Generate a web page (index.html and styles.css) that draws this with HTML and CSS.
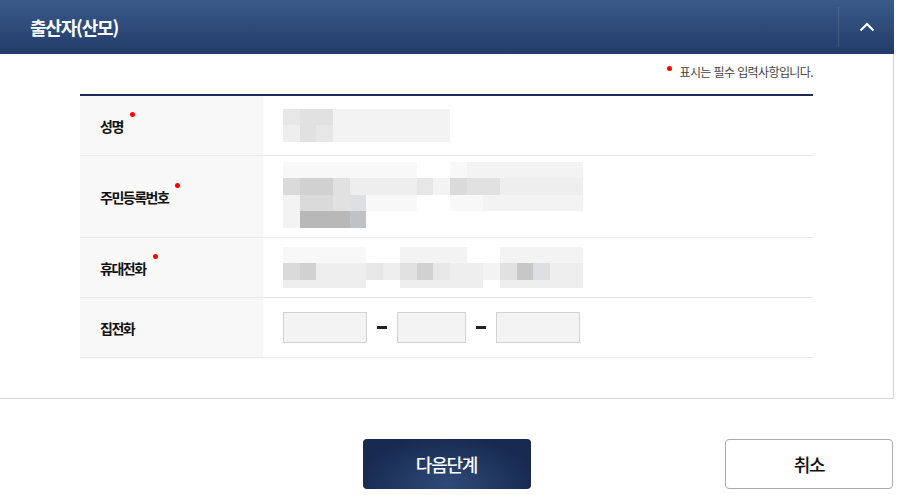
FILE: index.html
```html
<!DOCTYPE html>
<html lang="ko">

<head>
  <meta charset="UTF-8">
  <meta name="viewport" content="width=device-width, initial-scale=1.0">
  <title>출산자(산모)</title>

  <link rel="stylesheet" href="styles.css">
</head>

<body>
  <section class="panel">
    <header class="panel-head">
      <h2>출산자(산모)</h2>
      <button type="button" class="toggle" aria-label="접기">
        <svg width="16" height="10" viewBox="0 0 16 10">
          <path d="M1.5 8.5 L8 2 L14.5 8.5" fill="none" stroke="#fff" stroke-width="2.2" />
        </svg>
      </button>
    </header>

    <div class="panel-body">
      <p class="notice"><span class="req"></span>표시는 필수 입력사항입니다.</p>

      <table class="form-table">
        <tr>
          <th scope="row"><span class="label">성명<span class="req"></span></span></th>
          <td>
            <!-- 개인정보 모자이크 -->
            <div class="mosaic cols-10">
              <span class="s4"></span><span class="s5"></span><span class="s5"></span><span class="s2"></span><span class="s2"></span><span class="s2"></span><span class="s2"></span><span class="s2"></span><span class="s2"></span><span class="s2"></span>
              <span class="s3"></span><span class="s5"></span><span class="s4"></span><span class="s2"></span><span class="s2"></span><span class="s2"></span><span class="s2"></span><span class="s2"></span><span class="s2"></span><span class="s2"></span>
            </div>
          </td>
        </tr>
        <tr>
          <th scope="row"><span class="label">주민등록번호<span class="req"></span></span></th>
          <td class="tall">
            <div class="mosaic cols-18">
              <span class="s1"></span><span class="s1"></span><span class="s1"></span><span class="s1"></span><span class="s1"></span><span class="s1"></span><span class="s1"></span><span class="s1"></span><span class="s0"></span><span class="s0"></span><span class="s1"></span><span class="s2"></span><span class="s2"></span><span class="s2"></span><span class="s2"></span><span class="s2"></span><span class="s2"></span><span class="s2"></span>
              <span class="s6"></span><span class="s7"></span><span class="s7"></span><span class="s5"></span><span class="s3"></span><span class="s3"></span><span class="s3"></span><span class="s3"></span><span class="s4"></span><span class="s2"></span><span class="s6"></span><span class="s5"></span><span class="s5"></span><span class="s3"></span><span class="s3"></span><span class="s3"></span><span class="s3"></span><span class="s3"></span>
              <span class="s2"></span><span class="s6"></span><span class="s6"></span><span class="s5"></span><span class="s5b"></span><span class="s1"></span><span class="s1"></span><span class="s1"></span><span class="s0"></span><span class="s0"></span><span class="s1"></span><span class="s1"></span><span class="s2"></span><span class="s2"></span><span class="s2"></span><span class="s2"></span><span class="s2"></span><span class="s2"></span>
              <span class="s2"></span><span class="s9"></span><span class="s9"></span><span class="s9"></span><span class="s9b"></span>
            </div>
          </td>
        </tr>
        <tr>
          <th scope="row"><span class="label">휴대전화<span class="req"></span></span></th>
          <td>
            <div class="mosaic cols-18 phone">
              <span class="s1"></span><span class="s1"></span><span class="s1"></span><span class="s1"></span><span class="s1"></span><span class="s0"></span><span class="s0"></span><span class="s2"></span><span class="s2"></span><span class="s2"></span><span class="s2"></span><span class="s0"></span><span class="s0"></span><span class="s2"></span><span class="s2"></span><span class="s2"></span><span class="s2"></span><span class="s2"></span>
              <span class="s6"></span><span class="s7"></span><span class="s3"></span><span class="s3"></span><span class="s3"></span><span class="s4"></span><span class="s3"></span><span class="s5"></span><span class="s7"></span><span class="s4"></span><span class="s3"></span><span class="s3"></span><span class="s2"></span><span class="s5"></span><span class="s8"></span><span class="s5b"></span><span class="s3"></span><span class="s3"></span>
              <span class="s3"></span><span class="s3"></span><span class="s3"></span><span class="s3"></span><span class="s3"></span><span class="s0"></span><span class="s0"></span><span class="s3"></span><span class="s3"></span><span class="s3"></span><span class="s3"></span><span class="s3"></span><span class="s0"></span><span class="s3"></span><span class="s3"></span><span class="s3"></span><span class="s3"></span><span class="s3"></span>
            </div>
          </td>
        </tr>
        <tr>
          <th scope="row"><span class="label">집전화</span></th>
          <td>
            <div class="tel">
              <input type="text" class="tel-1" title="지역번호">
              <span class="dash"></span>
              <input type="text" class="tel-2" title="국번">
              <span class="dash"></span>
              <input type="text" class="tel-3" title="번호">
            </div>
          </td>
        </tr>
      </table>
    </div>
  </section>

  <div class="actions">
    <button type="button" class="btn-next">다음단계</button>
    <button type="button" class="btn-cancel">취소</button>
  </div>
</body>

</html>
```

FILE: styles.css
```css
* {
  box-sizing: border-box;
}

body {
  margin: 0;
  font-family: "Noto Sans CJK KR", "Noto Sans", sans-serif;
  color: #111;
  background: #fff;
}

.panel {
  width: 894px;
  border: 1px solid #d6d6d6;
  border-top: 0;
  border-left: 0;
}

.panel-head {
  display: flex;
  align-items: center;
  height: 54px;
  margin-right: -1px;
  background: linear-gradient(to bottom, #3a5a8a, #223c69);
}

.panel-head h2 {
  flex: 1;
  margin: 0;
  padding-left: 30px;
  font-size: 18px;
  font-weight: 700;
  letter-spacing: -1.2px;
  color: #fff;
}

.toggle {
  width: 56px;
  height: 40px;
  padding: 0;
  border: 0;
  border-left: 1px solid rgba(255, 255, 255, 0.12);
  background: none;
  display: flex;
  align-items: center;
  justify-content: center;
}

.panel-body {
  padding: 9px 80px 40px;
}

.notice {
  margin: 0 0 14px;
  text-align: right;
  font-size: 12px;
  letter-spacing: -0.6px;
  color: #444;
}

.notice .req {
  margin-right: 7px;
  vertical-align: 6px;
}

.req {
  display: inline-block;
  width: 5px;
  height: 5px;
  border-radius: 50%;
  background: #f00;
}

.form-table {
  width: 100%;
  border-collapse: collapse;
  border-top: 2px solid #1b2c52;
}

.form-table th,
.form-table td {
  height: 60px;
  padding: 0 20px;
  border-bottom: 1px solid #e8e8e8;
  vertical-align: middle;
}

.form-table th {
  width: 183px;
  padding-left: 20px;
  text-align: left;
  background: #f8f8f8;
}

.form-table td.tall {
  padding-top: 6px;
  padding-bottom: 9px;
}

.label {
  position: relative;
  font-size: 14px;
  font-weight: 700;
  letter-spacing: -1.5px;
}

.label .req {
  position: absolute;
  top: -4px;
  right: -12px;
}

/* 모자이크 처리된 입력값 */
.mosaic {
  display: grid;
  grid-auto-rows: 16.6px;
}

.cols-10 {
  grid-template-columns: repeat(10, 16.7px);
}

.cols-18 {
  grid-template-columns: repeat(18, 16.7px);
}

.mosaic.phone {
  grid-template-rows: 16.6px 16.6px 8px;
}

.s0 { background: #fff; }
.s1 { background: #f8f8f8; }
.s2 { background: #f3f3f3; }
.s3 { background: #eeeeee; }
.s4 { background: #e7e7e7; }
.s5 { background: #e1e1e1; }
.s5b { background: #dde0e2; }
.s6 { background: #dadada; }
.s7 { background: #d1d1d1; }
.s8 { background: #c7c7c7; }
.s9 { background: #b8b8b8; }
.s9b { background: #bfc3c5; }

.tel {
  display: flex;
  align-items: center;
}

.tel input {
  height: 31px;
  padding: 0 6px;
  border: 1px solid #d2d2d2;
  background: #f3f3f3;
  font: inherit;
}

.tel-1,
.tel-3 {
  width: 84px;
}

.tel-2 {
  width: 69px;
}

.dash {
  width: 10px;
  height: 3px;
  margin: 0 10px;
  background: #222;
}

.actions {
  display: grid;
  grid-template-columns: 1fr 168px 1fr;
  width: 893px;
  margin-top: 40px;
}

.actions button {
  height: 50px;
  border-radius: 4px;
  font-family: inherit;
  font-size: 18px;
  font-weight: 500;
  letter-spacing: -1.2px;
}

.btn-next {
  grid-column: 2;
  border: 0;
  color: #fff;
  background: radial-gradient(ellipse at 50% 90%, #2e4a78, #172a50 75%);
}

.btn-cancel {
  grid-column: 3;
  justify-self: end;
  width: 168px;
  border: 1px solid #aaa;
  background: #fff;
  color: #111;
}
```
